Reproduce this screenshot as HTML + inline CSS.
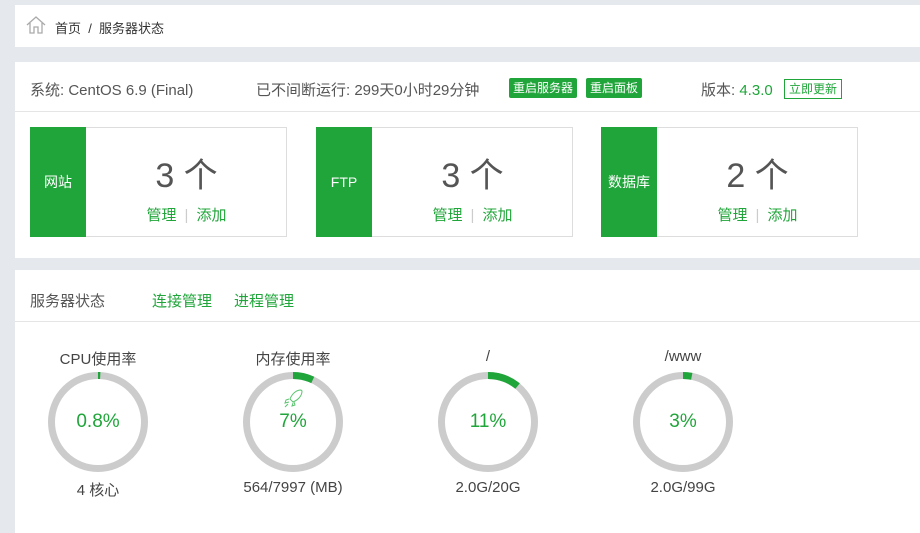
<html><head><style>
body{margin:0;background:#e5e9ed;font-family:"Liberation Sans","Noto Sans CJK SC",sans-serif;width:920px;height:533px;overflow:hidden;position:relative;color:#555}
.p{position:absolute;left:15px;right:0;background:#fff}
.g{color:#20a53a}
.abs{position:absolute;white-space:nowrap}
.btn{position:absolute;background:#20a53a;color:#fff;font-size:12px;padding:0 4px;height:20px;line-height:20px;top:16px;border-radius:2px}
.card{position:absolute;top:65px;width:255px;height:108px;border:1px solid #ddd;}
.card .l{position:absolute;left:0;top:0;width:56px;height:110px;margin:-1px;background:#20a53a;color:#fff;font-size:14px;line-height:110px;text-align:center}
.card .n{position:absolute;left:56px;right:0;top:20px;text-align:center;font-size:34px;color:#555}
.card .a{position:absolute;left:56px;right:0;top:76px;text-align:center;font-size:15px;color:#20a53a}
.card .a span{color:#ccc;margin:0 8px}
.ring{position:absolute;top:370px;width:104px;height:104px}
.t{position:absolute;text-align:center;width:160px;font-size:15px;color:#444}
</style></head><body>
<div class="p" style="top:5px;height:42px">
<svg class="abs" style="left:11px;top:10px" width="20" height="20" viewBox="0 0 20 20"><path d="M1 10 L10 2 L19 10 M4 8 V18 H8 V12 H12 V18 H16 V8" fill="none" stroke="#aaa" stroke-width="1.3"/></svg>
<span class="abs" style="left:40px;top:13px;font-size:13px;color:#333">首页 &nbsp;/&nbsp; 服务器状态</span>
</div>
<div class="p" style="top:62px;height:196px">
<span class="abs" style="left:15px;top:17px;font-size:15px">系统: CentOS 6.9 (Final)</span>
<span class="abs" style="left:241px;top:17px;font-size:15px">已不间断运行: 299天0小时29分钟</span>
<span class="btn" style="left:494px">重启服务器</span>
<span class="btn" style="left:571px">重启面板</span>
<span class="abs" style="left:686px;top:17px;font-size:15px">版本: <span class="g">4.3.0</span></span>
<span class="abs" style="left:769px;top:17px;font-size:12px;border:1px solid #20a53a;color:#20a53a;padding:0 4px;height:18px;line-height:18px">立即更新</span>
<div class="abs" style="left:0;right:0;top:49px;border-top:1px solid #e5e5e5"></div>
<div class="card" style="left:15px"><div class="l">网站</div><div class="n">3 个</div><div class="a">管理<span>|</span>添加</div></div>
<div class="card" style="left:301px"><div class="l">FTP</div><div class="n">3 个</div><div class="a">管理<span>|</span>添加</div></div>
<div class="card" style="left:586px"><div class="l">数据库</div><div class="n">2 个</div><div class="a">管理<span>|</span>添加</div></div>
</div>
<div class="p" style="top:270px;height:263px">
<span class="abs" style="left:15px;top:20px;font-size:15px">服务器状态</span>
<span class="abs g" style="left:137px;top:20px;font-size:15px">连接管理</span>
<span class="abs g" style="left:219px;top:20px;font-size:15px">进程管理</span>
<div class="abs" style="left:0;right:0;top:51px;border-top:1px solid #e5e5e5"></div>
</div>
<svg class="abs" style="left:0;top:0" width="920" height="533">
<g fill="none" stroke-width="7">
<circle cx="98" cy="422" r="46.5" stroke="#ccc"/><circle cx="98" cy="422" r="46.5" stroke="#20a53a" stroke-dasharray="2.3 400" transform="rotate(-90 98 422)"/>
<circle cx="293" cy="422" r="46.5" stroke="#ccc"/><circle cx="293" cy="422" r="46.5" stroke="#20a53a" stroke-dasharray="20.4 400" transform="rotate(-90 293 422)"/>
<circle cx="488" cy="422" r="46.5" stroke="#ccc"/><circle cx="488" cy="422" r="46.5" stroke="#20a53a" stroke-dasharray="32 400" transform="rotate(-90 488 422)"/>
<circle cx="683" cy="422" r="46.5" stroke="#ccc"/><circle cx="683" cy="422" r="46.5" stroke="#20a53a" stroke-dasharray="8.8 400" transform="rotate(-90 683 422)"/>
</g>
<path d="M301 390 C296 390 292 394 290 399 L293 402 C298 400 302 396 302 391 Z M289 399 L286 400 L285 403 L289 402 M293 403 L292 406 L295 405 L294 402 M288 404 L285 407" fill="none" stroke="#5cc46f" stroke-width="1"/>
</svg>
<div class="t" style="left:18px;top:348px">CPU使用率</div>
<div class="t" style="left:213px;top:348px">内存使用率</div>
<div class="t" style="left:408px;top:348px">/</div>
<div class="t" style="left:603px;top:348px">/www</div>
<div class="t g" style="left:18px;top:411px;font-size:19px;color:#20a53a">0.8%</div>
<div class="t g" style="left:213px;top:411px;font-size:19px;color:#20a53a">7%</div>
<div class="t g" style="left:408px;top:411px;font-size:19px;color:#20a53a">11%</div>
<div class="t g" style="left:603px;top:411px;font-size:19px;color:#20a53a">3%</div>
<div class="t" style="left:18px;top:479px">4 核心</div>
<div class="t" style="left:213px;top:479px">564/7997 (MB)</div>
<div class="t" style="left:408px;top:479px">2.0G/20G</div>
<div class="t" style="left:603px;top:479px">2.0G/99G</div>
</body></html>
